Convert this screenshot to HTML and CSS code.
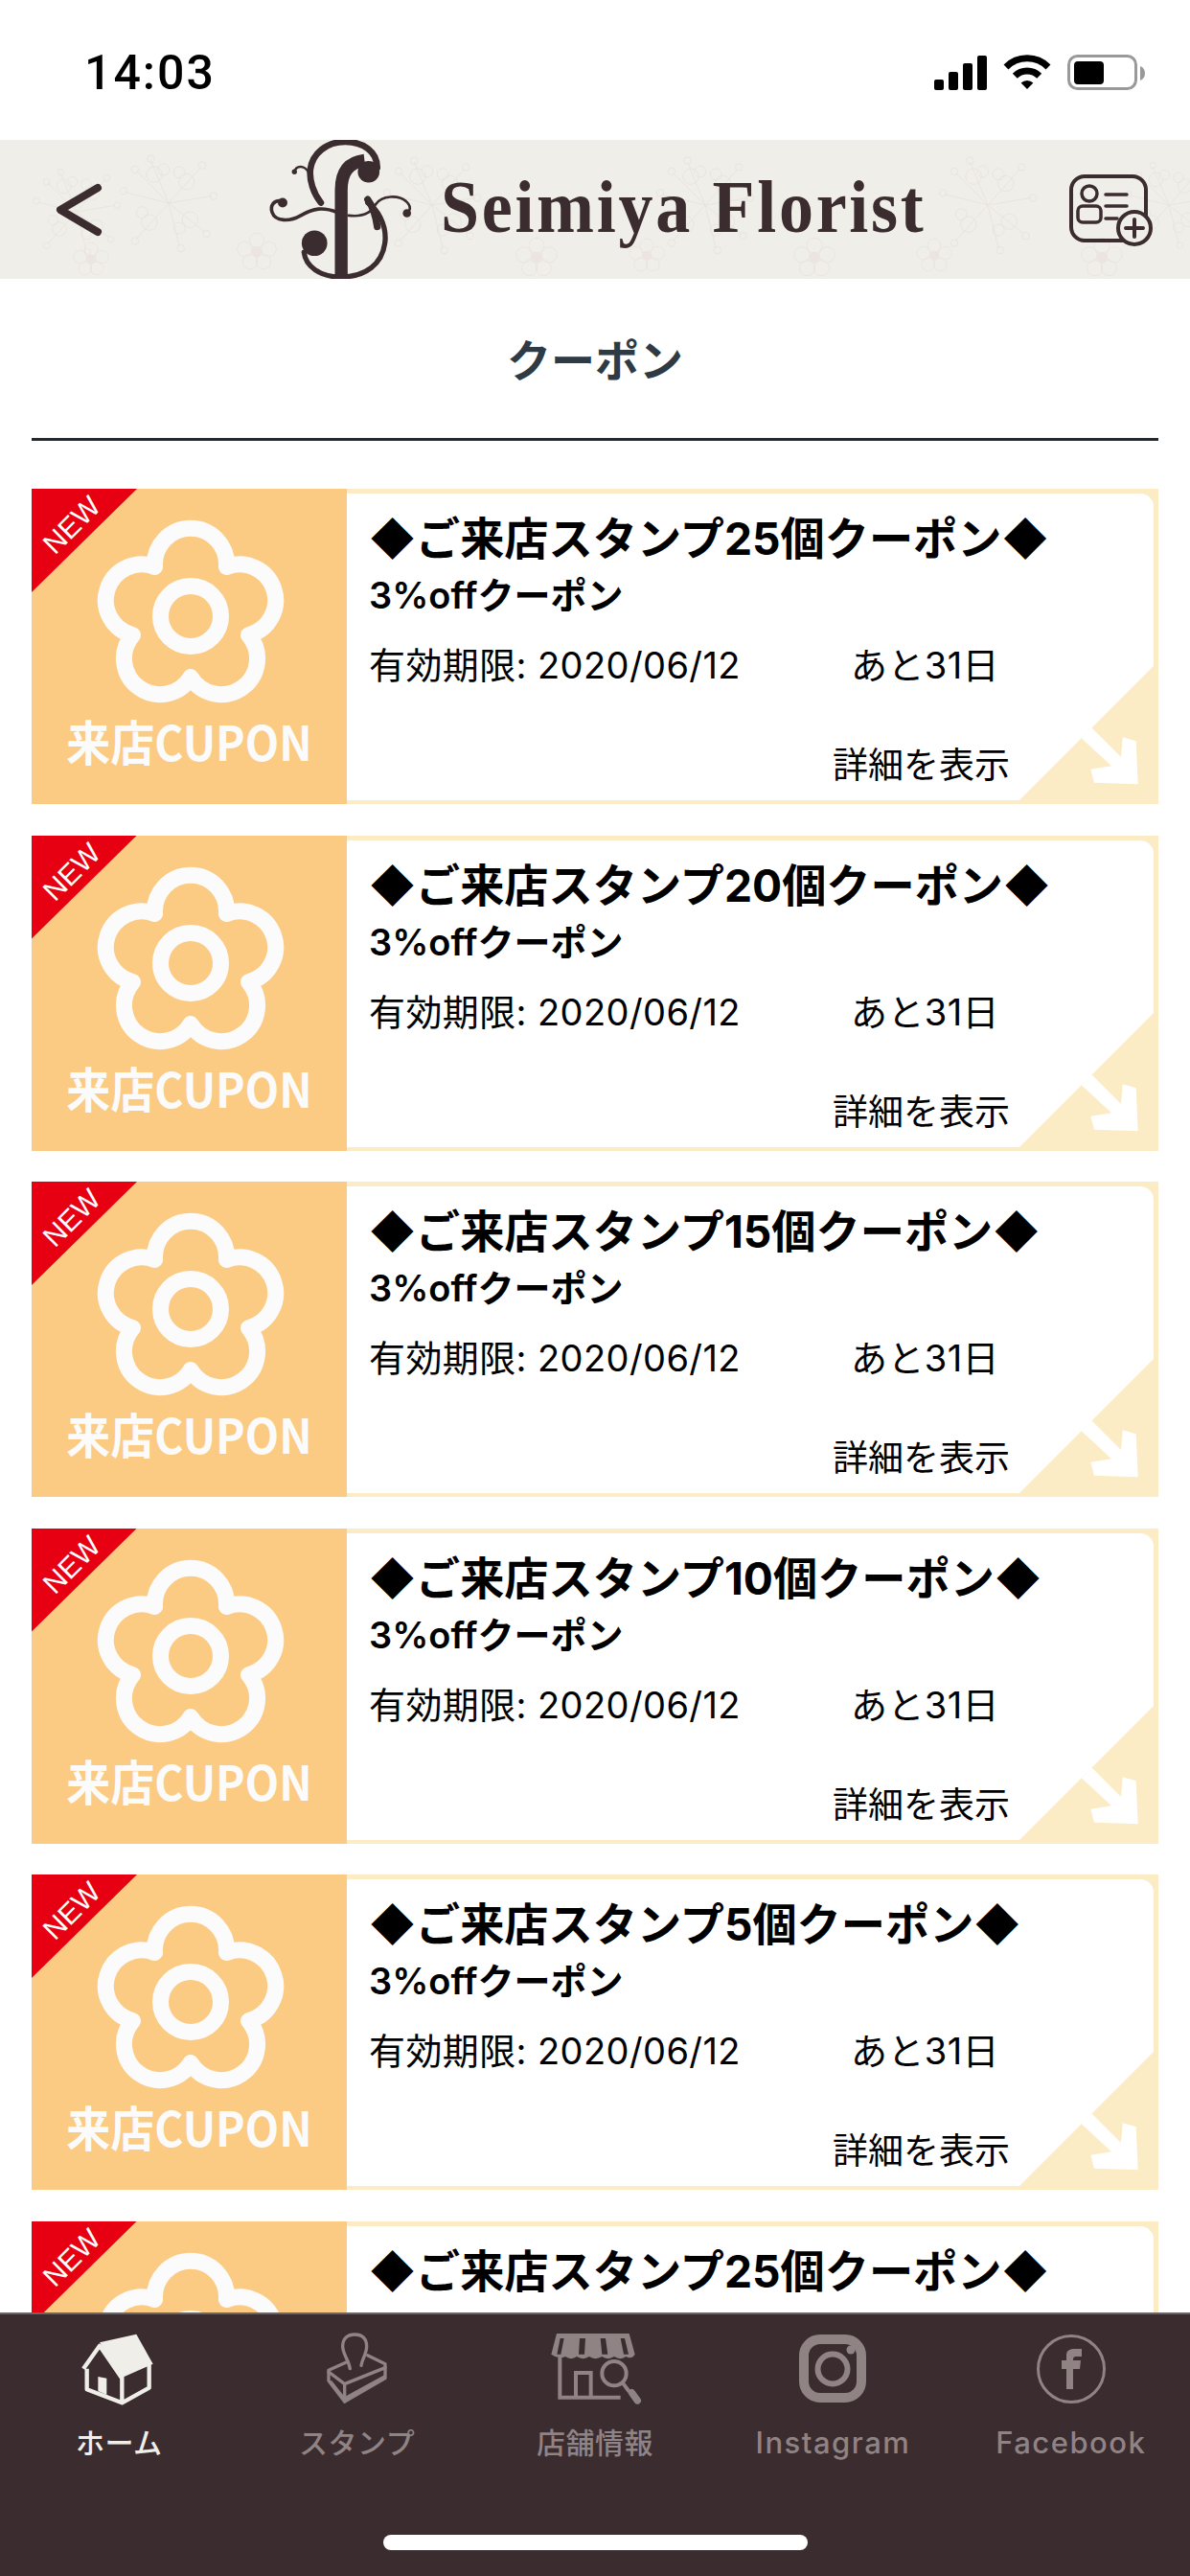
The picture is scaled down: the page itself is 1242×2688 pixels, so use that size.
FILE: index.html
```html
<!DOCTYPE html>
<html lang="ja">
<head>
	<meta charset="utf-8">
	<title>クーポン</title>
	<link rel="stylesheet" href="styles.css">
</head>
<body>

	<!-- Shared shapes for the coupon cards -->
	<svg class="defs" width="0" height="0">
		<symbol id="flower" viewBox="0 0 329 226">
			<path d="M128.6 81.5A37.5 37.5 0 1 1 203.4 81.5A37.5 37.5 0 1 1 226.5 152.7A37.5 37.5 0 1 1 166 196.6A37.5 37.5 0 1 1 105.5 152.7A37.5 37.5 0 1 1 128.6 81.5Z" fill="none" stroke="#fbfbfb" stroke-width="17" stroke-linejoin="round"/>
			<circle cx="166" cy="133" r="31.5" fill="none" stroke="#fbfbfb" stroke-width="17"/>
		</symbol>
		<symbol id="corner" viewBox="0 0 140 140">
			<polygon points="140,0 140,140 0,140" fill="#fcecc5"/>
			<polygon points="75.3,64.3 106,95 107.7,74.3 121.7,78.3 123.7,123.3 78,121.7 74.3,107.7 96,104.3 64.7,75.3" fill="#fff"/>
		</symbol>
		<symbol id="sprig" viewBox="0 0 150 150">
			<g fill="none" stroke="#e9e2dc" stroke-width="1.2">
				<path d="M75 75L30 30M75 75L50 15M75 75L120 25M75 75L135 65M75 75L125 115M75 75L90 135M75 75L30 125M75 75L15 60"/>
				<circle cx="50" cy="13" r="5"/><circle cx="28" cy="28" r="5"/><circle cx="122" cy="22" r="5"/><circle cx="138" cy="65" r="5"/>
				<circle cx="128" cy="118" r="5"/><circle cx="92" cy="138" r="5"/><circle cx="28" cy="128" r="5"/><circle cx="12" cy="58" r="5"/>
				<circle cx="55" cy="35" r="11"/><circle cx="68" cy="28" r="8"/><circle cx="100" cy="45" r="11"/><circle cx="90" cy="32" r="8"/>
				<circle cx="105" cy="98" r="11"/><circle cx="90" cy="110" r="8"/><circle cx="48" cy="102" r="11"/><circle cx="38" cy="88" r="8"/>
			</g>
		</symbol>
		<symbol id="blossom" viewBox="0 0 80 60">
			<g fill="none" stroke="#e9e2dc" stroke-width="1.2">
				<circle cx="40" cy="14" r="11"/><circle cx="22" cy="27" r="11"/><circle cx="58" cy="27" r="11"/><circle cx="30" cy="46" r="11"/><circle cx="50" cy="46" r="11"/>
			</g>
			<circle cx="40" cy="31" r="8" fill="#ebe4df"/>
		</symbol>
	</svg>

	<div class="status-bar">
		<span class="clock">14:03</span>
		<svg class="status-icons" width="225" height="50" viewBox="975 50 225 50">
			<rect x="975" y="83" width="10" height="11" rx="2"/>
			<rect x="990" y="75" width="10" height="19" rx="2"/>
			<rect x="1005" y="66" width="10" height="28" rx="2"/>
			<rect x="1020" y="58" width="10" height="36" rx="2"/>
			<path d="M1050 70A31 31 0 0 1 1094 70M1059.300 79.300A18 18 0 0 1 1084.700 79.300" fill="none" stroke="#000" stroke-width="7"/>
			<path d="M1072 93L1065.600 86.600A9 9 0 0 1 1078.400 86.600Z"/>
			<rect x="1115.500" y="58.500" width="70" height="34" rx="9" fill="#fff" stroke="#999" stroke-width="3"/>
			<rect x="1121" y="64" width="31" height="24" rx="4"/>
			<path d="M1190 69q5 2 5 7.500t-5 7.500z" fill="#999"/>
		</svg>
	</div>

	<header class="top-bar">
		<svg class="top-bg" width="1242" height="145">
			<use href="#sprig" x="30" y="25" width="100" height="100"/>
			<use href="#sprig" x="120" y="10" width="112" height="112"/>
			<use href="#sprig" x="395" y="12" width="112" height="112"/>
			<use href="#sprig" x="680" y="12" width="112" height="112"/>
			<use href="#sprig" x="975" y="12" width="112" height="112"/>
			<use href="#sprig" x="1170" y="18" width="100" height="100"/>
			<use href="#blossom" x="70" y="105" width="50" height="38"/>
			<use href="#blossom" x="240" y="95" width="56" height="42"/>
			<use href="#blossom" x="530" y="100" width="60" height="44"/>
			<use href="#blossom" x="650" y="100" width="50" height="40"/>
			<use href="#blossom" x="820" y="100" width="60" height="44"/>
			<use href="#blossom" x="950" y="100" width="50" height="40"/>
			<use href="#blossom" x="1120" y="100" width="60" height="44"/>
		</svg>
		<svg class="back-icon" width="65" height="70" viewBox="50 183 65 70">
			<path d="M102 195L63 218L102 241" fill="none" stroke="#3b2c30" stroke-width="8" stroke-linecap="round" stroke-linejoin="round"/>
		</svg>
		<svg class="logo-mark" width="153" height="145" viewBox="80 48 460 436">
			<g fill="none" stroke="#3b2c30" stroke-linecap="round">
				<path d="M312 478V205C312 150 335 118 385 112" stroke-width="40" stroke-linecap="butt"/>
				<path d="M425 135C425 85 380 54 325 54C265 54 222 90 215 140C211 175 225 215 248 245" stroke-width="20"/>
				<path d="M195 400C200 445 245 478 310 478C385 478 445 440 450 360C452 310 425 265 395 245" stroke-width="16"/>
				<path d="M125 240C100 235 88 255 95 275C105 305 150 305 185 285C225 262 255 258 300 275" stroke-width="11"/>
				<path d="M335 285C375 290 405 280 420 250C440 222 490 220 515 240C528 252 530 262 525 270" stroke-width="8"/>
				<path d="M395 235C410 255 420 285 425 320" stroke-width="22"/>
				<path d="M165 148C170 128 195 125 210 150" stroke-width="7"/>
			</g>
			<g fill="#3b2c30">
				<circle cx="398" cy="148" r="34"/>
				<circle cx="228" cy="372" r="40"/>
				<circle cx="128" cy="245" r="15"/>
				<circle cx="518" cy="278" r="13"/>
				<circle cx="165" cy="148" r="8"/>
			</g>
		</svg>
		<span class="logo-text">Seimiya Florist</span>
		<svg class="card-icon" width="90" height="80" viewBox="1116 178 90 80">
			<g fill="none" stroke="#3b2c30" stroke-linecap="round">
				<rect x="1118" y="183" width="78" height="67" rx="14" stroke-width="4"/>
				<circle cx="1137" cy="201" r="8" stroke-width="3.500"/>
				<rect x="1125" y="214" width="24" height="17" rx="5" stroke-width="3.500"/>
				<path d="M1154 202h22M1154 214h22M1154 227h12" stroke-width="3.500"/>
				<circle cx="1184" cy="237" r="17" fill="#f0eee9" stroke-width="4"/>
				<path d="M1175 237h18M1184 228v18" stroke-width="4"/>
			</g>
		</svg>
	</header>

	<h1 class="page-title">クーポン</h1>

	<div class="coupon-list">

		<div class="coupon">
			<div class="thumb">
				<span class="new-tag"><span>NEW</span></span>
				<svg class="flower" width="329" height="226"><use href="#flower"/></svg>
				<span class="thumb-label">来店CUPON</span>
			</div>
			<div class="coupon-frame">
				<div class="coupon-body">
					<div class="coupon-name">◆ご来店スタンプ25個クーポン◆</div>
					<div class="coupon-sub">3%offクーポン</div>
					<div class="coupon-date"><span class="date-text">有効期限: 2020/06/12</span><span>あと31日</span></div>
					<div class="coupon-more">詳細を表示</div>
					<svg class="corner" width="140" height="140"><use href="#corner"/></svg>
				</div>
			</div>
		</div>

		<div class="coupon">
			<div class="thumb">
				<span class="new-tag"><span>NEW</span></span>
				<svg class="flower" width="329" height="226"><use href="#flower"/></svg>
				<span class="thumb-label">来店CUPON</span>
			</div>
			<div class="coupon-frame">
				<div class="coupon-body">
					<div class="coupon-name">◆ご来店スタンプ20個クーポン◆</div>
					<div class="coupon-sub">3%offクーポン</div>
					<div class="coupon-date"><span class="date-text">有効期限: 2020/06/12</span><span>あと31日</span></div>
					<div class="coupon-more">詳細を表示</div>
					<svg class="corner" width="140" height="140"><use href="#corner"/></svg>
				</div>
			</div>
		</div>

		<div class="coupon">
			<div class="thumb">
				<span class="new-tag"><span>NEW</span></span>
				<svg class="flower" width="329" height="226"><use href="#flower"/></svg>
				<span class="thumb-label">来店CUPON</span>
			</div>
			<div class="coupon-frame">
				<div class="coupon-body">
					<div class="coupon-name">◆ご来店スタンプ15個クーポン◆</div>
					<div class="coupon-sub">3%offクーポン</div>
					<div class="coupon-date"><span class="date-text">有効期限: 2020/06/12</span><span>あと31日</span></div>
					<div class="coupon-more">詳細を表示</div>
					<svg class="corner" width="140" height="140"><use href="#corner"/></svg>
				</div>
			</div>
		</div>

		<div class="coupon">
			<div class="thumb">
				<span class="new-tag"><span>NEW</span></span>
				<svg class="flower" width="329" height="226"><use href="#flower"/></svg>
				<span class="thumb-label">来店CUPON</span>
			</div>
			<div class="coupon-frame">
				<div class="coupon-body">
					<div class="coupon-name">◆ご来店スタンプ10個クーポン◆</div>
					<div class="coupon-sub">3%offクーポン</div>
					<div class="coupon-date"><span class="date-text">有効期限: 2020/06/12</span><span>あと31日</span></div>
					<div class="coupon-more">詳細を表示</div>
					<svg class="corner" width="140" height="140"><use href="#corner"/></svg>
				</div>
			</div>
		</div>

		<div class="coupon">
			<div class="thumb">
				<span class="new-tag"><span>NEW</span></span>
				<svg class="flower" width="329" height="226"><use href="#flower"/></svg>
				<span class="thumb-label">来店CUPON</span>
			</div>
			<div class="coupon-frame">
				<div class="coupon-body">
					<div class="coupon-name">◆ご来店スタンプ5個クーポン◆</div>
					<div class="coupon-sub">3%offクーポン</div>
					<div class="coupon-date"><span class="date-text">有効期限: 2020/06/12</span><span>あと31日</span></div>
					<div class="coupon-more">詳細を表示</div>
					<svg class="corner" width="140" height="140"><use href="#corner"/></svg>
				</div>
			</div>
		</div>

		<!-- Cut off by the tab bar, only the top of this card shows -->
		<div class="coupon">
			<div class="thumb">
				<span class="new-tag"><span>NEW</span></span>
				<svg class="flower" width="329" height="226"><use href="#flower"/></svg>
			</div>
			<div class="coupon-frame">
				<div class="coupon-body">
					<div class="coupon-name">◆ご来店スタンプ25個クーポン◆</div>
				</div>
			</div>
		</div>

	</div>

	<!-- Tab bar sits over the scrolling list -->
	<nav class="tab-bar">
		<div class="tab tab-active">
			<svg width="130" height="95" viewBox="0 0 390 285">
				<path d="M135 58L250 32L302 125L205 168Z" fill="#f0eee9"/>
				<path d="M84 140L135 68L205 170M95 140V205L205 247L290 200V125M205 165V247" fill="none" stroke="#f0eee9" stroke-width="13" stroke-linejoin="round"/>
				<path d="M130 165L157 170V222L130 210Z" fill="#f0eee9"/>
			</svg>
			<span>ホーム</span>
		</div>
		<div class="tab">
			<svg width="110" height="95" viewBox="-7 0 330 285">
				<g fill="none" stroke="#8f8384" stroke-width="10" stroke-linejoin="round" stroke-linecap="round">
					<path d="M135 140C130 110 112 95 112 70C112 45 128 33 150 33C172 33 187 45 187 70C187 95 172 110 170 130"/>
					<path d="M128 118L68 145V178L118 243L245 170V125L190 98"/>
					<path d="M68 150L118 188L245 137M118 188V243"/>
				</g>
				<path d="M68 178L118 243L245 170V158L118 228L78 178Z" fill="#8f8384"/>
			</svg>
			<span>スタンプ</span>
		</div>
		<div class="tab">
			<svg width="110" height="95" viewBox="0 0 330 285">
				<path d="M45 30H272L290 95Q280 112 262 102Q245 115 225 102Q205 115 187 102Q165 115 147 102Q128 115 108 102Q90 115 72 102Q50 112 28 95Z" fill="#8f8384"/>
				<path d="M56 45H68L58 95H46ZM117 45H135L132 95H114ZM182 45H198L205 95H187ZM245 45H258L270 95H255Z" fill="#3b2c30"/>
				<g fill="none" stroke="#8f8384" stroke-width="12">
					<path d="M55 105V230H245"/>
					<path d="M105 225V153H152V225"/>
					<circle cx="225" cy="155" r="38"/>
					<path d="M252 185L272 212"/>
				</g>
				<path d="M280 215L298 240" fill="none" stroke="#8f8384" stroke-width="22" stroke-linecap="round"/>
			</svg>
			<span>店舗情報</span>
		</div>
		<div class="tab">
			<svg width="110" height="95">
				<rect x="25" y="16" width="60" height="61" rx="17" fill="none" stroke="#8f8384" stroke-width="10"/>
				<circle cx="55" cy="47" r="15.500" fill="none" stroke="#8f8384" stroke-width="6"/>
				<circle cx="74" cy="27" r="4.500" fill="#8f8384"/>
			</svg>
			<span class="tab-latin">Instagram</span>
		</div>
		<div class="tab">
			<svg width="110" height="95">
				<circle cx="55" cy="47" r="34.500" fill="none" stroke="#8f8384" stroke-width="3"/>
				<path d="M50 68V47H45V38H50V33C50 28 53 26 58 26H66V34H60C58 34 57 35 57 37V38H65L64 47H57V68Z" fill="#8f8384"/>
			</svg>
			<span class="tab-latin">Facebook</span>
		</div>
		<div class="home-bar"></div>
	</nav>

</body>
</html>
```

FILE: styles.css
```css
html, body {
	margin: 0;
	padding: 0;
}

body {
	position: relative;
	width: 1242px;
	height: 2688px;
	overflow: hidden;
	background-color: #fff;
	color: #000;
	font-family: "Inter", "Noto Sans CJK JP", sans-serif;
}

svg {
	display: block;
}

.defs {
	position: absolute;
}

/* Status bar */

.status-bar {
	display: flex;
	justify-content: space-between;
	align-items: center;
	height: 146px;
	padding: 6px 42px 0 88px;
	box-sizing: border-box;
}

.clock {
	font-family: "Roboto", sans-serif;
	font-size: 50px;
	font-weight: 500;
	letter-spacing: 2px;
	line-height: 60px;
}

.status-icons {
	margin-top: -2px;
}

/* Header */

.top-bar {
	position: relative;
	display: flex;
	align-items: center;
	height: 145px;
	background-color: #f0eee9;
	overflow: hidden;
}

.top-bg {
	position: absolute;
	left: 0;
	top: 0;
}

.back-icon {
	position: relative;
	margin-left: 50px;
}

.logo-mark {
	position: relative;
	margin-left: 164px;
	flex: none;
}

.logo-text {
	position: relative;
	margin-left: 28px;
	margin-top: -6px;
	width: 656px;
	color: #3b2c30;
	font-family: "Liberation Serif", serif;
	font-size: 72px;
	font-weight: bold;
	letter-spacing: 2.700px;
	line-height: 80px;
	white-space: nowrap;
	transform: scaleY(1.1);
}

.card-icon {
	position: relative;
	flex: none;
}

/* Page title */

.page-title {
	margin: 0 33px;
	padding: 5px 0 1px;
	border-bottom: 3px solid #1f2a32;
	color: #2e3a44;
	font-size: 46px;
	font-weight: bold;
	line-height: 160px;
	text-align: center;
}

/* Coupon cards */

.coupon-list {
	display: flex;
	flex-direction: column;
	gap: 32.500px;
	margin: 50px 33px 0;
}

.coupon {
	display: flex;
	height: 329px;
	flex: none;
}

.thumb {
	position: relative;
	display: flex;
	flex-direction: column;
	align-items: center;
	width: 329px;
	flex: none;
	background-color: #fbcb84;
}

.new-tag {
	position: absolute;
	left: 0;
	top: 0;
	width: 110px;
	height: 108px;
	background-color: #e60012;
	clip-path: polygon(0 0, 100% 0, 0 100%);
}

.new-tag span {
	position: absolute;
	left: 7px;
	top: 24px;
	width: 70px;
	color: #fff;
	font-family: "Liberation Sans", sans-serif;
	font-size: 30px;
	line-height: 28px;
	text-align: center;
	transform: rotate(-45deg);
}

.thumb-label {
	margin-top: 6px;
	color: #fbfbfb;
	font-family: "Noto Sans CJK JP", sans-serif;
	font-size: 46px;
	font-weight: bold;
	line-height: 60px;
	white-space: nowrap;
	transform: scaleY(1.08);
}

.coupon-frame {
	display: flex;
	flex: 1;
	padding: 5px 5px 4px 0;
	background-color: #fcecc5;
}

.coupon-body {
	position: relative;
	display: flex;
	flex-direction: column;
	flex: 1;
	padding: 17px 0 14px 23px;
	background-color: #fff;
	border-top-right-radius: 14px;
}

.coupon-name {
	font-size: 46.200px;
	font-weight: bold;
	line-height: 60px;
	white-space: nowrap;
}

.coupon-sub {
	margin-top: 7px;
	font-size: 38px;
	font-weight: 600;
	line-height: 44px;
}

.coupon-date {
	display: flex;
	margin-top: 29px;
	font-size: 38px;
	letter-spacing: 0.400px;
	line-height: 44px;
}

.date-text {
	width: 503px;
}

.coupon-more {
	margin-top: auto;
	margin-right: 150px;
	font-size: 37px;
	line-height: 44px;
	text-align: right;
}

.corner {
	position: absolute;
	right: 0;
	bottom: 0;
}

/* Tab bar */

.tab-bar {
	position: absolute;
	left: 0;
	top: 2413px;
	display: grid;
	grid-template-columns: repeat(5, 1fr);
	align-items: start;
	box-sizing: border-box;
	width: 1242px;
	height: 275px;
	padding-top: 10px;
	border-top: 2px solid #6d6469;
	background-color: #3b2c30;
}

.tab {
	display: flex;
	flex-direction: column;
	align-items: center;
	color: #8f8384;
	font-size: 30px;
	font-weight: 500;
	line-height: 40px;
	letter-spacing: 0.500px;
}

.tab span {
	margin-top: 9px;
}

.tab .tab-latin {
	font-size: 31px;
	letter-spacing: 1.500px;
}

.tab-active {
	color: #f0eee9;
}

.home-bar {
	position: absolute;
	left: 400px;
	top: 230px;
	width: 443px;
	height: 16px;
	border-radius: 8px;
	background-color: #fff;
}
```
